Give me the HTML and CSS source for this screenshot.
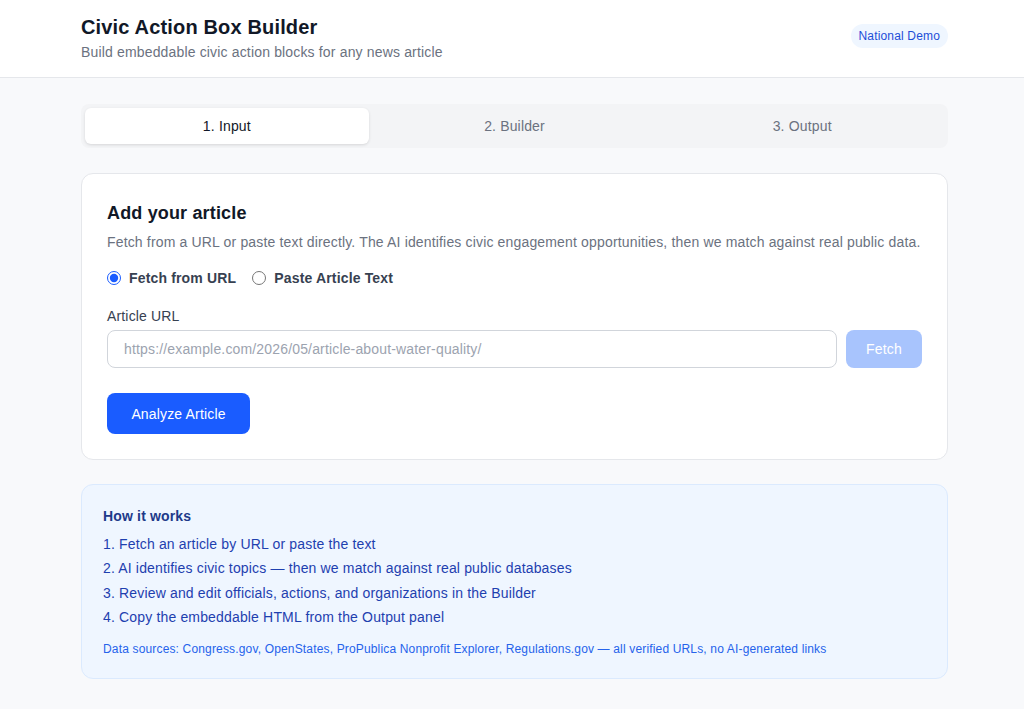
FILE: index.html
```html
<!DOCTYPE html>
<html>
<head>
	<title>Civic Action Box Builder</title>
	<link rel="stylesheet" href="styles.css">
</head>
<body>
	<div class="header">
		<div class="header-inner">
			<div>
				<h1 class="title">Civic Action Box Builder</h1>
				<div class="subtitle">Build embeddable civic action blocks for any news article</div>
			</div>
			<span class="badge">National Demo</span>
		</div>
	</div>
	<div class="main">
		<div class="tabs">
			<button class="tab active">1. Input</button>
			<button class="tab">2. Builder</button>
			<button class="tab">3. Output</button>
		</div>

		<div class="card">
			<h2>Add your article</h2>
			<p class="desc">Fetch from a URL or paste text directly. The AI identifies civic engagement opportunities, then we match against real public data.</p>
			<div class="radios">
				<label class="radio"><input type="radio" name="mode" checked> Fetch from URL</label>
				<label class="radio"><input type="radio" name="mode"> Paste Article Text</label>
			</div>
			<label for="url" class="label">Article URL</label>
			<div class="url-row">
				<input class="input" type="text" id="url" placeholder="https://example.com/2026/05/article-about-water-quality/">
				<button class="fetch" disabled>Fetch</button>
			</div>
			<button class="analyze">Analyze Article</button>
		</div>

		<div class="info">
			<h3>How it works</h3>
			<ol class="steps">
				<li>1. Fetch an article by URL or paste the text</li>
				<li>2. AI identifies civic topics — then we match against real public databases</li>
				<li>3. Review and edit officials, actions, and organizations in the Builder</li>
				<li>4. Copy the embeddable HTML from the Output panel</li>
			</ol>
			<p class="sources">Data sources: Congress.gov, OpenStates, ProPublica Nonprofit Explorer, Regulations.gov — all verified URLs, no AI-generated links</p>
		</div>
	</div>
</body>
</html>
```

FILE: styles.css
```css
body {
	margin: 0;
	padding: 0;
	font-family: "Liberation Sans", Arial, sans-serif;
	letter-spacing: 0.01em;
	background-color: #f8f9fb;
	color: #111827;
}

.header {
	background-color: white;
	border-bottom: 1px solid #e5e7eb;
	height: 78px;
	box-sizing: border-box;
}

.header-inner {
	margin: 0 76px 0 81px;
	display: flex;
	align-items: center;
	justify-content: space-between;
	padding-top: 15px;
}

.title {
	margin: 0;
	font-size: 20px;
	font-weight: bold;
	color: #111827;
	line-height: 24px;
}

.subtitle {
	margin-top: 4px;
	font-size: 14px;
	color: #6b7280;
	line-height: 18px;
}

.badge {
	background-color: #eff6ff;
	color: #1d4ed8;
	font-size: 12px;
	padding: 5px 8px;
	border-radius: 12px;
	margin-bottom: 4px;
}

.main {
	margin: 0 76px 0 81px;
	padding-top: 26px;
}

.tabs {
	display: flex;
	background-color: #f3f4f6;
	border-radius: 8px;
	padding: 4px;
	gap: 4px;
}

.tab {
	flex: 1;
	border: none;
	background: none;
	font-family: inherit;
	letter-spacing: inherit;
	font-size: 14px;
	color: #6b7280;
	height: 36px;
	border-radius: 6px;
	cursor: pointer;
}

.tab.active {
	background-color: white;
	color: #111827;
	box-shadow: 0 1px 3px rgba(0, 0, 0, 0.12);
}

.card {
	margin-top: 25px;
	background-color: white;
	border: 1px solid #e5e7eb;
	border-radius: 12px;
	padding: 28px 25px 25px 25px;
}

h2 {
	margin: 0;
	font-size: 18px;
	font-weight: bold;
	color: #111827;
	line-height: 22px;
}

.desc {
	margin: 8px 0 0 0;
	font-size: 14px;
	color: #6b7280;
	line-height: 20px;
}

.radios {
	display: flex;
	gap: 16px;
	margin-top: 18px;
}

.radio {
	display: flex;
	align-items: center;
	gap: 8px;
	font-size: 14px;
	font-weight: bold;
	color: #374151;
}

.radio input {
	margin: 0;
	width: 14px;
	height: 14px;
	accent-color: #1a5cff;
}

.label {
	display: block;
	margin-top: 21px;
	font-size: 14px;
	color: #374151;
	line-height: 18px;
}

.url-row {
	display: flex;
	gap: 9px;
	margin-top: 5px;
}

.input {
	flex: 1;
	height: 38px;
	box-sizing: border-box;
	border: 1px solid #d1d5db;
	border-radius: 8px;
	padding: 0 16px;
	font-family: inherit;
	letter-spacing: inherit;
	font-size: 14px;
	color: #111827;
}

.input::placeholder {
	color: #9ca3af;
}

.fetch {
	width: 76px;
	height: 38px;
	border: none;
	border-radius: 8px;
	background-color: #a8c4fd;
	color: white;
	font-family: inherit;
	letter-spacing: inherit;
	font-size: 14px;
}

.analyze {
	display: block;
	margin-top: 25px;
	width: 143px;
	height: 41px;
	border: none;
	border-radius: 8px;
	background-color: #1a5cff;
	color: white;
	font-family: inherit;
	letter-spacing: inherit;
	font-size: 14px;
	cursor: pointer;
}

.info {
	margin-top: 24px;
	background-color: #eff6ff;
	border: 1px solid #dbeafe;
	border-radius: 12px;
	padding: 22px 21px 21px 21px;
}

h3 {
	margin: 0;
	font-size: 14px;
	font-weight: bold;
	color: #1e3a8a;
	line-height: 18px;
}

.steps {
	list-style: none;
	margin: 7px 0 0 0;
	padding: 0;
	font-size: 14px;
	color: #1e40af;
}

.steps li {
	line-height: 24.3px;
}

.sources {
	margin: 12px 0 0 0;
	font-size: 12px;
	color: #2563eb;
	line-height: 16px;
}
```
